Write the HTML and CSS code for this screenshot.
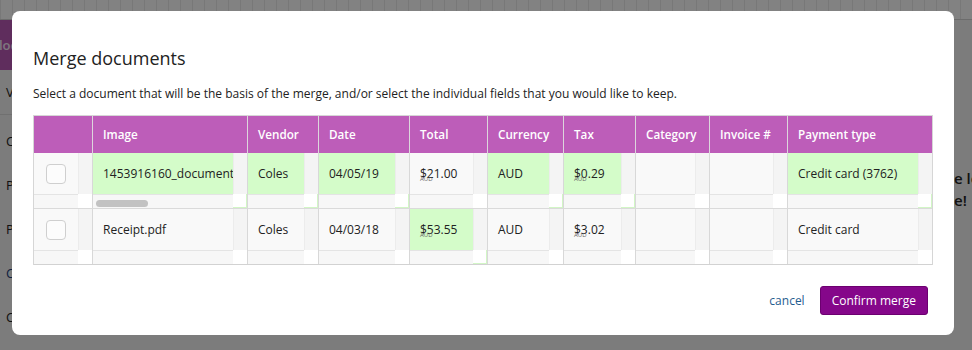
FILE: index.html
```html
<!DOCTYPE html>
<html lang="en">
<head>
<meta charset="utf-8">
<title>Merge documents</title>
<link rel="stylesheet" href="styles.css">
</head>
<body>
<div class="page">
  <div class="topbar"></div>
  <div class="main">
    <aside class="sidebar">
      <div class="side-head">loc</div>
      <div class="side-tab">View</div>
      <ul class="side-list">
        <li>Coles</li>
        <li>Petrol</li>
        <li>Parking</li>
        <li class="link">Coffee</li>
        <li>Coles</li>
      </ul>
    </aside>
    <section class="content"></section>
    <aside class="promo">
      <p>e lovely</p>
      <p>e!</p>
    </aside>
  </div>
</div>
<div class="overlay"></div>
<div class="modal" role="dialog" aria-labelledby="mtitle">
  <h1 id="mtitle" class="modal-title">Merge documents</h1>
  <p class="modal-desc">Select a document that will be the basis of the merge, and/or select the individual fields that you would like to keep.</p>
  <div class="grid">
    <div class="grow head">
      <div class="hcell"></div>
      <div class="hcell">Image</div>
      <div class="hcell">Vendor</div>
      <div class="hcell">Date</div>
      <div class="hcell">Total</div>
      <div class="hcell">Currency</div>
      <div class="hcell">Tax</div>
      <div class="hcell">Category</div>
      <div class="hcell">Invoice #</div>
      <div class="hcell">Payment type</div>
    </div>
    <div class="grow">
      <div class="cell"><div class="sc"><div class="val chk"><span class="box"></span></div><div class="vtrack"></div><div class="htrack"></div><div class="corner"></div></div></div>
      <div class="cell sel"><div class="sc"><div class="val">1453916160_document.pdf</div><div class="vtrack"></div><div class="htrack"><span class="thumb"></span></div><div class="corner"></div></div></div>
      <div class="cell sel"><div class="sc"><div class="val">Coles</div><div class="vtrack"></div><div class="htrack"></div><div class="corner"></div></div></div>
      <div class="cell sel"><div class="sc"><div class="val">04/05/19</div><div class="vtrack"></div><div class="htrack"></div><div class="corner"></div></div></div>
      <div class="cell"><div class="sc"><div class="val"><span class="money">$21.00<span class="cur">AUD</span></span></div><div class="vtrack"></div><div class="htrack"></div><div class="corner"></div></div></div>
      <div class="cell sel"><div class="sc"><div class="val">AUD</div><div class="vtrack"></div><div class="htrack"></div><div class="corner"></div></div></div>
      <div class="cell sel"><div class="sc"><div class="val"><span class="money">$0.29<span class="cur">AUD</span></span></div><div class="vtrack"></div><div class="htrack"></div><div class="corner"></div></div></div>
      <div class="cell"><div class="sc"><div class="val"></div><div class="vtrack"></div><div class="htrack"></div><div class="corner"></div></div></div>
      <div class="cell"><div class="sc"><div class="val"></div><div class="vtrack"></div><div class="htrack"></div><div class="corner"></div></div></div>
      <div class="cell sel"><div class="sc"><div class="val">Credit card (3762)</div><div class="vtrack"></div><div class="htrack"></div><div class="corner"></div></div></div>
    </div>
    <div class="grow last">
      <div class="cell"><div class="sc"><div class="val chk"><span class="box"></span></div><div class="vtrack"></div><div class="htrack"></div><div class="corner"></div></div></div>
      <div class="cell"><div class="sc"><div class="val">Receipt.pdf</div><div class="vtrack"></div><div class="htrack"></div><div class="corner"></div></div></div>
      <div class="cell"><div class="sc"><div class="val">Coles</div><div class="vtrack"></div><div class="htrack"></div><div class="corner"></div></div></div>
      <div class="cell"><div class="sc"><div class="val">04/03/18</div><div class="vtrack"></div><div class="htrack"></div><div class="corner"></div></div></div>
      <div class="cell sel"><div class="sc"><div class="val"><span class="money">$53.55<span class="cur">AUD</span></span></div><div class="vtrack"></div><div class="htrack"></div><div class="corner"></div></div></div>
      <div class="cell"><div class="sc"><div class="val">AUD</div><div class="vtrack"></div><div class="htrack"></div><div class="corner"></div></div></div>
      <div class="cell"><div class="sc"><div class="val"><span class="money">$3.02<span class="cur">AUD</span></span></div><div class="vtrack"></div><div class="htrack"></div><div class="corner"></div></div></div>
      <div class="cell"><div class="sc"><div class="val"></div><div class="vtrack"></div><div class="htrack"></div><div class="corner"></div></div></div>
      <div class="cell"><div class="sc"><div class="val"></div><div class="vtrack"></div><div class="htrack"></div><div class="corner"></div></div></div>
      <div class="cell"><div class="sc"><div class="val">Credit card</div><div class="vtrack"></div><div class="htrack"></div><div class="corner"></div></div></div>
    </div>
  </div>
  <div class="modal-foot">
    <a class="cancel" href="#">cancel</a>
    <button class="confirm" type="button">Confirm merge</button>
  </div>
</div>
</body>
</html>
```
FILE: styles.css
```css
* { box-sizing: border-box; }
html, body { margin: 0; padding: 0; }
body {
  width: 972px;
  height: 350px;
  overflow: hidden;
  font-family: "Open Sans", "Noto Sans", sans-serif;
  color: #222;
  background: #ededed;
  position: relative;
}

/* background page */
.page { width: 972px; height: 350px; }
.topbar {
  height: 20px;
  background-color: #fafafa;
  background-image: repeating-linear-gradient(90deg, #e6e6e6 0, #e6e6e6 1px, transparent 1px, transparent 12px);
  border-bottom: 1px solid #d0d0d0;
}
.main { display: flex; height: 330px; }
.sidebar { width: 200px; flex: none; }
.side-head {
  height: 50px;
  background: #b657b2;
  color: #f2e6f1;
  font-size: 13px;
  font-weight: 600;
  line-height: 50px;
  text-indent: -1px;
  white-space: nowrap;
  overflow: hidden;
}
.side-tab {
  height: 45px;
  border-bottom: 1px solid #d6d6d6;
  font-size: 13px;
  line-height: 45px;
  padding-left: 6px;
}
.side-list { list-style: none; margin: 0; padding: 0; }
.side-list li {
  height: 44px;
  line-height: 44px;
  font-size: 13px;
  padding-left: 6px;
  padding-top: 4px;
}
.side-list li.link { color: #1b3d7a; }
.content { flex: 1; }
.promo {
  width: 18px;
  flex: none;
  padding-top: 147px;
  font-size: 15px;
  font-weight: 600;
  line-height: 22px;
  white-space: nowrap;
  overflow: hidden;
}
.promo p { margin: 0; }

.overlay {
  position: absolute;
  inset: 0;
  background: rgba(0, 0, 0, 0.48);
}

/* modal */
.modal {
  position: absolute;
  left: 12px;
  top: 11px;
  width: 942px;
  height: 324px;
  background: #fff;
  border-radius: 8px;
  padding: 35px 21px 0 21px;
}
.modal-title {
  margin: 0;
  font-size: 18px;
  font-weight: 400;
  line-height: 24px;
  color: #222;
}
.modal-desc {
  margin: 15px 0 0;
  font-size: 12px;
  line-height: 18px;
  color: #222;
}

.grid {
  margin-top: 12px;
  width: 900px;
  border: 1px solid #d6d6d6;
  border-bottom: none;
}
.grow {
  display: grid;
  grid-template-columns: 58px 155px 71px 91px 78px 76px 72px 74px 78px 145px;
  border-bottom: 1px solid #dadada;
}
.grow.last { border-bottom: 1px solid #d2d2d2; }
.head { background: #bd5db9; border-bottom: none; }
.hcell {
  height: 37px;
  line-height: 37px;
  padding-left: 10px;
  color: #fff;
  font-size: 11.7px;
  font-weight: 600;
  border-left: 1px solid #dcd6dc;
  white-space: nowrap;
}
.hcell:first-child { border-left: none; }

.cell { border-left: 1px solid #d8d8d8; }
.cell:first-child { border-left: none; }
.sc {
  display: grid;
  grid-template-columns: 1fr 14px;
  grid-template-rows: 41px 14px;
  height: 55px;
}
.val {
  background: #f9f9f9;
  font-size: 12px;
  line-height: 41px;
  padding-left: 10px;
  white-space: nowrap;
  overflow: hidden;
}
.vtrack {
  background: #f4f4f4;
  border-left: 1px solid #ececec;
}
.htrack {
  background: #f7f7f7;
  border-top: 1px solid #e4e4e4;
  padding: 5px 0 0 3px;
}
.corner { background: #fff; }
.sel .val { background: #d4fcc9; }
.sel .sc { box-shadow: inset -1px -1px 0 #cdf5c1; }
.sel .corner { border-right: 1px solid #d2f6c6; border-bottom: 1px solid #d2f6c6; }
.thumb {
  display: block;
  width: 52px;
  height: 7px;
  border-radius: 4px;
  background: #c2c2c2;
}
.chk { display: flex; align-items: center; padding-left: 12px; }
.box {
  width: 20px;
  height: 20px;
  border: 1px solid #cfcfcf;
  border-radius: 4px;
  background: #fcfcfc;
}
.money { position: relative; }
.cur {
  position: absolute;
  left: 0;
  top: 11px;
  font-size: 6px;
  line-height: 6px;
  color: #666;
}

.modal-foot {
  margin-top: 21px;
  display: flex;
  justify-content: flex-end;
  align-items: center;
  gap: 15px;
  padding-right: 5px;
}
.cancel {
  color: #1f5d8f;
  font-size: 12px;
  text-decoration: none;
}
.confirm {
  height: 29px;
  padding: 0 11px;
  background: #85078a;
  border: 1px solid #6c0070;
  border-radius: 3px;
  color: #fff;
  font-family: "Open Sans", "Noto Sans", sans-serif;
  font-size: 12px;
  font-weight: 500;
}
```
